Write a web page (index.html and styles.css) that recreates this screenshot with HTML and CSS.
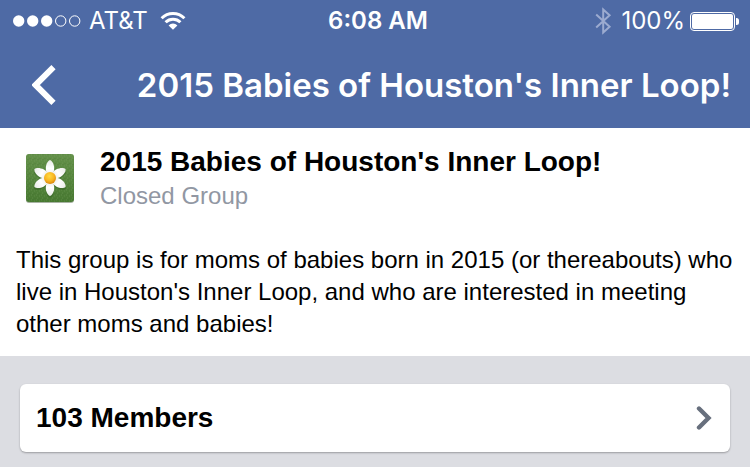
FILE: index.html
```html
<!DOCTYPE html>
<html lang="en">
<head>
<meta charset="utf-8">
<meta name="viewport" content="width=device-width, initial-scale=1">
<title>2015 Babies of Houston's Inner Loop!</title>
<link rel="stylesheet" href="styles.css">
</head>
<body>
<header class="top">
  <div class="status">
    <div class="status-side">
      <svg class="signal" width="68" height="12" viewBox="0 0 68 12" aria-hidden="true">
        <g fill="#fff"><circle cx="5.7" cy="6" r="5.7"/><circle cx="19.7" cy="6" r="5.7"/><circle cx="33.7" cy="6" r="5.7"/></g>
        <g fill="none" stroke="#fff"><circle cx="47.7" cy="6" r="5.2"/><circle cx="61.7" cy="6" r="5.2"/></g>
      </svg>
      <span class="carrier">AT&amp;T</span>
      <svg width="26" height="18" viewBox="0 0 26 18" aria-hidden="true">
        <g fill="none" stroke="#fff" stroke-width="3">
          <path d="M1.6 6.2a16.2 16.2 0 0 1 22.8 0"/>
          <path d="M5.6 10.3a10.5 10.5 0 0 1 14.8 0"/>
        </g>
        <path d="M13 17.8 8.6 13.4a6.3 6.3 0 0 1 8.8 0z" fill="#fff"/>
      </svg>
    </div>
    <span class="clock">6:08 AM</span>
    <div class="status-side status-right">
      <svg class="bluetooth" width="17" height="28" viewBox="0 0 17 28" aria-hidden="true">
        <path d="M1.2 7.5 14.6 19.8 8.2 25.5V2.5L14.6 8.2 1.2 20.5" fill="none" stroke="#9cabd0" stroke-width="2"/>
      </svg>
      <span>100%</span>
      <svg class="battery" width="49" height="19" viewBox="0 0 49 19" aria-hidden="true">
        <rect x=".5" y=".5" width="44" height="18" rx="3.5" fill="none" stroke="#fff"/>
        <rect x="2" y="2" width="41" height="15" rx="2" fill="#fff"/>
        <path d="M46 6h.5a2.5 2.5 0 0 1 2.5 2.5v2a2.5 2.5 0 0 1-2.5 2.5H46z" fill="#fff"/>
      </svg>
    </div>
  </div>
  <nav class="nav">
    <button class="back" type="button" aria-label="Back">
      <svg width="24" height="40" viewBox="0 0 24 40" aria-hidden="true">
        <path d="M21.5 2.2 3.5 20l18 17.8" fill="none" stroke="#fff" stroke-width="6"/>
      </svg>
    </button>
    <span class="nav-title">2015 Babies of Houston's Inner Loop!</span>
  </nav>
</header>
<main>
  <section class="about">
    <div class="group">
      <svg class="group-icon" width="48" height="49" viewBox="0 0 48 49" aria-hidden="true">
        <defs>
          <linearGradient id="grass" x1="0" y1="0" x2="0" y2="1"><stop offset="0" stop-color="#64914a"/><stop offset="1" stop-color="#487a32"/></linearGradient>
          <linearGradient id="petal" x1="0" y1="0" x2="0" y2="1"><stop offset="0" stop-color="#e9ebe7"/><stop offset=".5" stop-color="#fff"/><stop offset="1" stop-color="#dfe4dc"/></linearGradient>
          <radialGradient id="center" cx=".45" cy=".35" r=".65"><stop offset="0" stop-color="#ffdb42"/><stop offset=".6" stop-color="#f8b520"/><stop offset="1" stop-color="#db860d"/></radialGradient>
          <pattern id="blades" width="5" height="5" patternUnits="userSpaceOnUse"><path d="M0 1h1M3 2h1M1 4h1" stroke="#86a96c" opacity=".3"/><path d="M2 0v1M4 4v1" stroke="#315d22" opacity=".25"/></pattern>
        </defs>
        <rect y="1" width="48" height="48" rx="3" fill="#a9b3a4"/>
        <rect width="48" height="48" rx="3" fill="url(#grass)"/>
        <rect width="48" height="48" rx="3" fill="url(#blades)"/>
        <g fill="#2c5b1d" opacity=".4" transform="translate(24 25.5)">
          <ellipse id="p" cy="-10.5" rx="4" ry="7.8"/>
          <use href="#p" transform="rotate(60)"/><use href="#p" transform="rotate(120)"/><use href="#p" transform="rotate(180)"/><use href="#p" transform="rotate(240)"/><use href="#p" transform="rotate(300)"/>
        </g>
        <g fill="url(#petal)" transform="translate(24 24)">
          <path id="q" d="M0-18C2.600-17 4.200-13 4.200-10 4.200-6 3-3 0-1-3-3-4.200-6-4.200-10-4.200-13-2.600-17 0-18z"/>
          <use href="#q" transform="rotate(60)"/><use href="#q" transform="rotate(120)"/><use href="#q" transform="rotate(180)"/><use href="#q" transform="rotate(240)"/><use href="#q" transform="rotate(300)"/>
        </g>
        <circle cx="24" cy="24" r="6" fill="url(#center)"/>
      </svg>
      <div>
        <h1 class="group-name">2015 Babies of Houston's Inner Loop!</h1>
        <p class="group-type">Closed Group</p>
      </div>
    </div>
    <p class="description">This group is for moms of babies born in 2015 (or thereabouts) who live in Houston's Inner Loop, and who are interested in meeting other moms and babies!</p>
  </section>
  <a class="members" href="#members">
    <span>103 Members</span>
    <svg width="16" height="24" viewBox="0 0 16 24" aria-hidden="true">
      <path d="M3 2.500 12.500 12 3 21.500" fill="none" stroke="#676f7d" stroke-width="4.400" stroke-linecap="round"/>
    </svg>
  </a>
</main>
</body>
</html>
```
FILE: styles.css
```css
* {
  box-sizing: border-box;
}

body {
  margin: 0;
  background: #dcdde2;
  color: #000;
  font-family: "Liberation Sans", Arial, sans-serif;
}

h1,
p {
  margin: 0;
}

svg {
  display: block;
  flex: none;
}

.top {
  background: #4e6aa5;
  color: #fff;
  font-family: Inter, sans-serif;
}

.status {
  display: flex;
  align-items: center;
  height: 42px;
  padding: 0 11px 0 13px;
  font-size: 24px;
  line-height: 42px;
}

.status-side {
  display: flex;
  flex: 1;
  align-items: center;
  gap: 8px;
}

.carrier {
  margin-right: 4px;
}

.status-right {
  justify-content: flex-end;
  gap: 5px;
}

.clock {
  margin-left: 4px;
  font-weight: 600;
}

.bluetooth {
  margin-right: 4px;
}

.nav {
  display: flex;
  align-items: center;
  justify-content: space-between;
  height: 86px;
  padding: 0 19px 0 32px;
}

.back {
  padding: 0;
  border: 0;
  background: none;
}

.nav-title {
  font-size: 33px;
  font-weight: 600;
  line-height: 84px;
  white-space: nowrap;
}

.about {
  padding: 16px;
  background: #fff;
}

.group {
  display: flex;
  align-items: center;
  gap: 26px;
  height: 68px;
  padding-left: 10px;
}

.group-name {
  font-size: 28px;
  line-height: 36px;
}

.group-type {
  color: #9197a3;
  font-size: 24px;
  line-height: 32px;
}

.description {
  margin-top: 32px;
  font-size: 24px;
  line-height: 32px;
}

.members {
  display: flex;
  align-items: center;
  justify-content: space-between;
  height: 68px;
  margin: 28px 20px 15px;
  padding: 0 18px 0 16px;
  border-radius: 6px;
  background: #fff;
  box-shadow: 0 1px 2px #0000004d;
  color: #000;
  font-size: 28px;
  font-weight: 700;
  text-decoration: none;
}
```
